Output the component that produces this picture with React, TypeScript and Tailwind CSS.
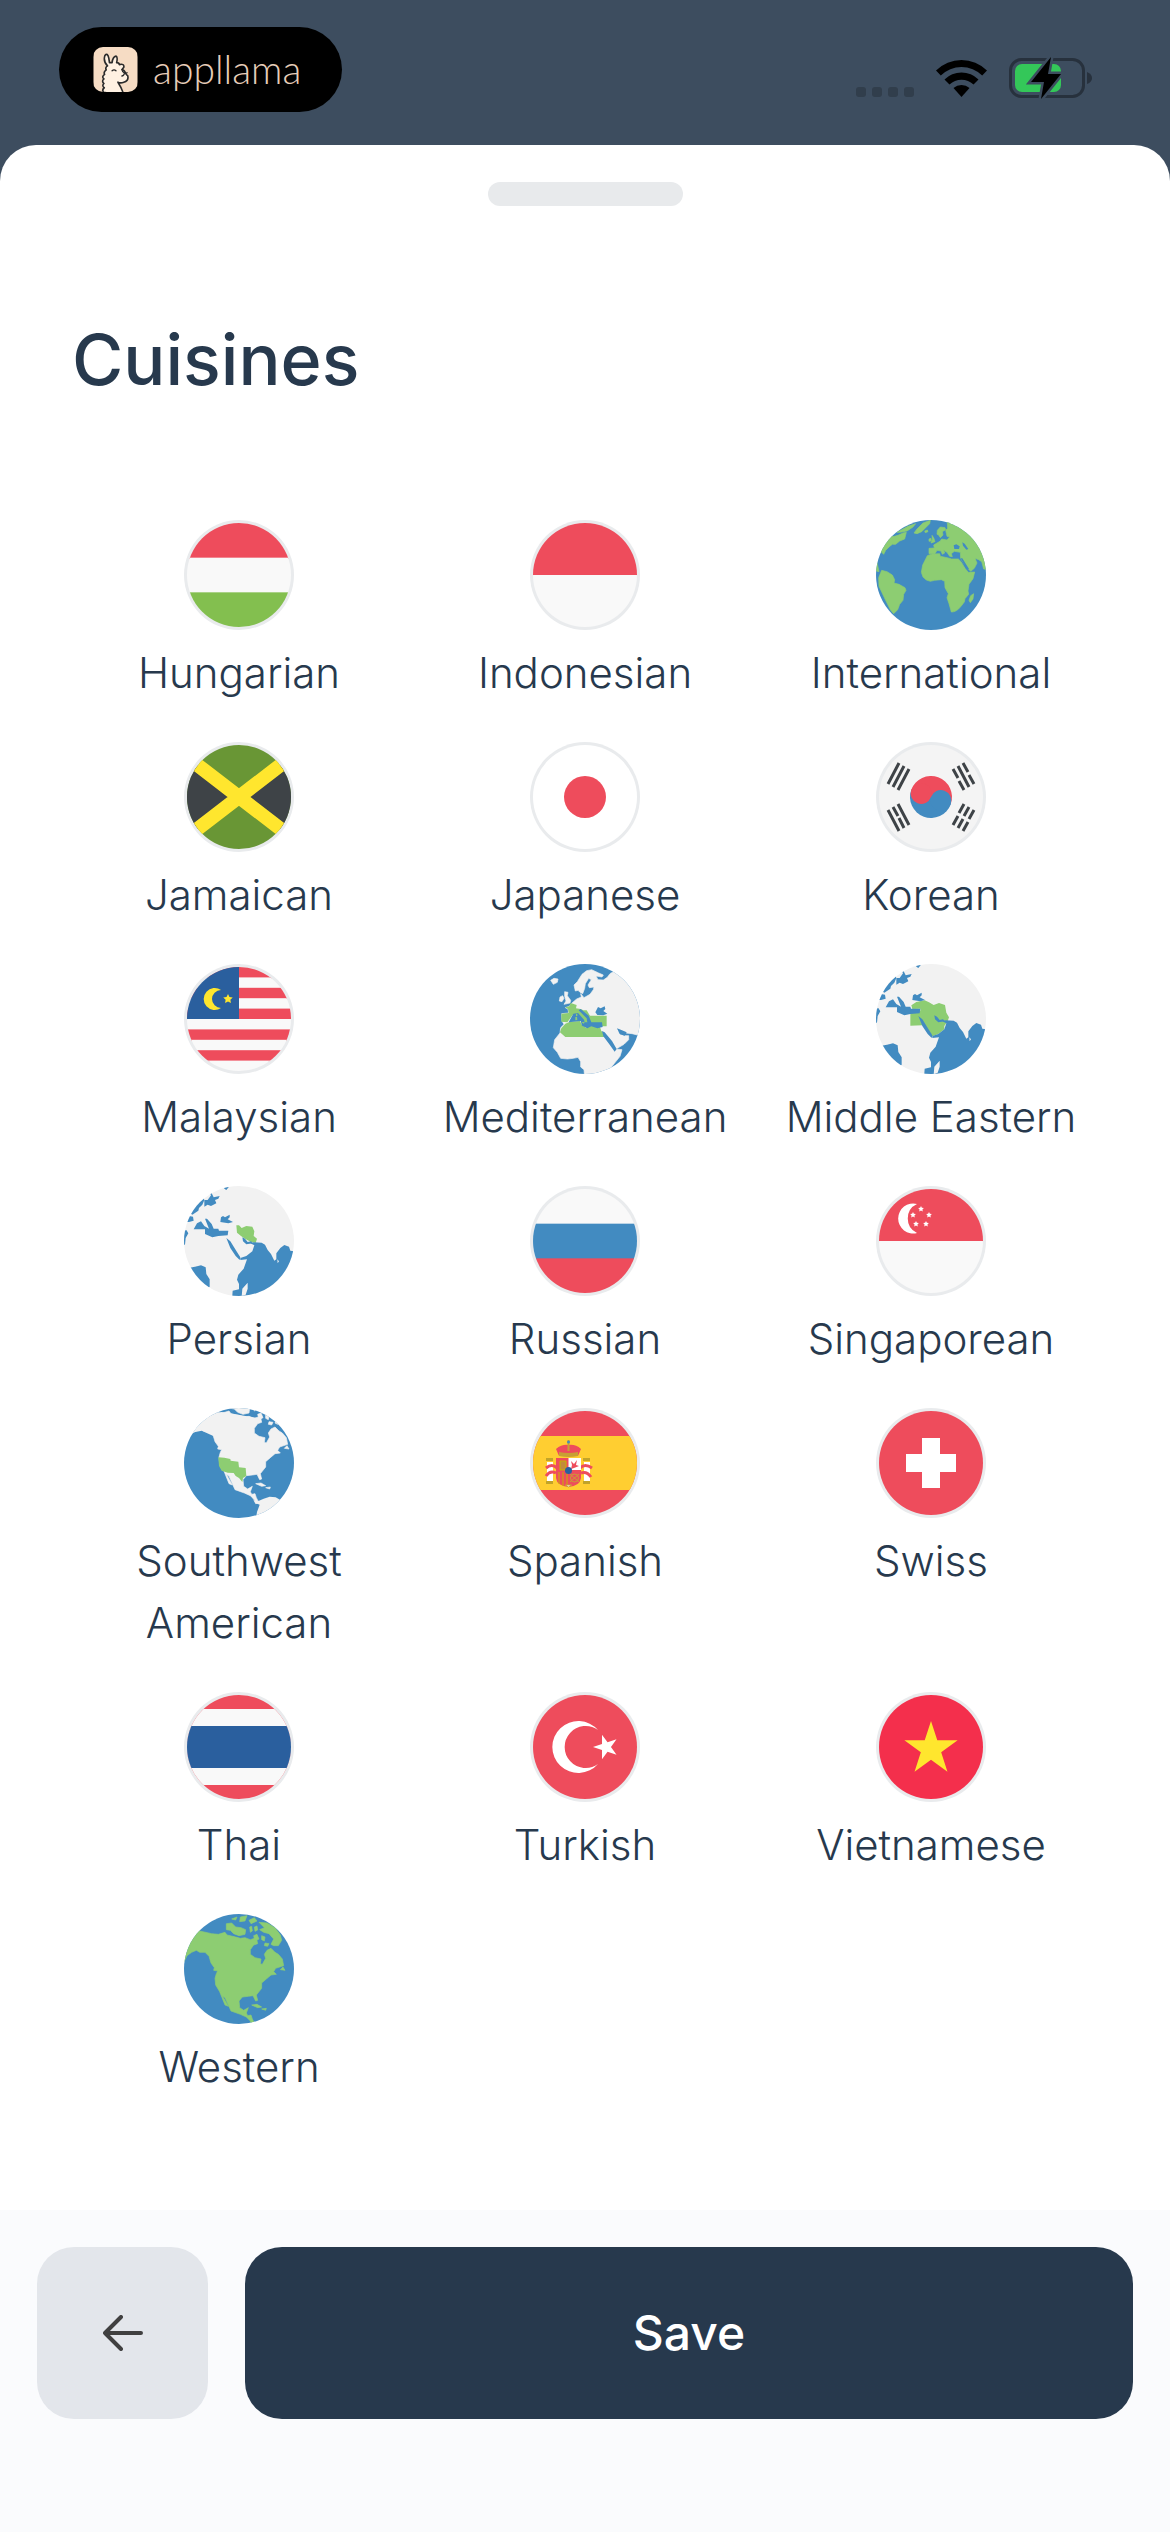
import React, { useState } from 'react';

interface Cuisine {
  name: string;
  icon: React.ReactNode;
}

const BLUE = '#428bc1';
const GREEN = '#8dcd72';
const LAND = '#f2f2f2';
const RED = '#ee4c5c';
const WHITE = '#f9f9f9';

const Flag = ({ children }: { children: React.ReactNode }) => (
  <span className="block size-[110px] rounded-full bg-[#e9ebed] p-[3px]">
    <svg viewBox="0 0 104 104" className="size-full rounded-full" aria-hidden="true">
      {children}
    </svg>
  </span>
);

const Globe = ({ viewBox, children }: { viewBox: string; children: React.ReactNode }) => (
  <svg viewBox={viewBox} className="size-[110px] rounded-full" aria-hidden="true">
    {children}
  </svg>
);

const Stripes = ({ colors }: { colors: string[] }) => (
  <>
    {colors.map((color, i) => (
      <rect key={i} y={(104 / colors.length) * i} width="104" height={104 / colors.length + 1} fill={color} />
    ))}
  </>
);

const starPoints = (cx: number, cy: number, r: number, ratio = 0.382, turn = -90) =>
  Array.from({ length: 10 }, (_, i) => {
    const radius = i % 2 ? r * ratio : r;
    const a = ((turn + i * 36) * Math.PI) / 180;
    return `${cx + radius * Math.cos(a)},${cy + radius * Math.sin(a)}`;
  }).join(' ');

const InternationalGlobe = () => (
  <Globe viewBox="49 59 330 330">
    <rect x="40" y="50" width="350" height="350" fill={BLUE} />
    <g fill={GREEN} stroke={GREEN} strokeWidth="2" strokeLinejoin="round">
      <path d="M203 166L216 161L240 160L242 168L262 172L276 176L296 176L304 184L316 204L326 216L345 215L340 235L328 252L325 272L327 282L316 295L314 305L304 318Q290 336 275 335L268 310L262 292L266 280L256 262L255 243L245 238L225 240L212 243L200 239L190 230L185 216L189 194Z" />
      <path d="M262 50L400 60L400 210L372 206L366 184L357 178L346 174L352 188L344 204L333 213L326 206L312 188L303 174L302 156L284 153L275 160L278 169L270 168L262 156L252 150L255 158L248 162L244 152L232 150L226 160L208 160L208 144L224 143L222 134L232 128L242 122L246 116L262 119L270 110L262 108L258 90L264 84Z" />
      <path d="M233 90L242 80L256 82L258 88L248 94L250 104L242 112L237 104L232 102Z" />
      <path d="M217 105L222 112L226 124L214 128L218 118ZM208 116l6-2l1 8l-7 1ZM195 92l8-3l2 5l-8 3Z" />
      <path d="M163 98L172 86L190 68L212 60L210 70L198 82L186 94L172 100Z" />
      <path d="M60 150L85 110L104 108L115 105L130 98L140 96L135 116L120 122L108 132L98 132L88 140L78 150L72 162ZM112 96L145 78L168 70L160 80L142 92L122 96Z" />
      <path d="M66 210L82 214L98 224L105 238L103 248L118 252L136 262L139 270L132 282L130 300L120 312L114 328L102 340L92 328L76 296L58 258L57 232Z" />
      <path d="M50 178L55 200L58 214L50 212ZM342 280L340 296L332 307L328 300L333 286Z" />
    </g>
    <path fill={BLUE} d="M282 135L290 132L300 138L298 146L284 146ZM308 126L315 130L326 146L320 148L310 136ZM303 174L308 174L328 206L322 208Z" />
  </Globe>
);

const MediterraneanGlobe = () => (
  <Globe viewBox="60 57 330 330">
    <rect x="50" y="50" width="350" height="350" fill={BLUE} />
    <g fill={LAND} stroke={LAND} strokeWidth="2" strokeLinejoin="round">
      <path d="M192 120L202 110L216 88L230 77L245 74L266 84L280 90L276 96L258 93L264 104L280 105L292 97L300 86L310 80L400 60L400 270L382 270L366 266L348 264L340 258L334 262L322 251L328 266L344 272L356 272L356 284L342 298L318 312L336 314L330 334L306 364L290 400L224 400L222 374L212 366L212 350L204 337L190 340L172 342L152 340L142 322L130 308L134 284L150 264L152 248L162 238L156 228L155 206L176 204L174 192L166 188L178 184L186 174L200 162L214 156L212 146L222 158L240 148L250 134L252 126L238 128L234 120L244 104L236 100L226 116L224 130L218 146L210 142L204 136L196 138Z" />
      <path d="M122 106L132 100L144 102L142 112L130 118ZM164 140L174 142L172 152L182 166L180 174L162 178L168 168L164 154ZM150 156l8-4l4 8l-6 10l-8-2Z" />
    </g>
    <path fill={GREEN} d="M150 262L154 250L166 236L180 230L210 228L216 240L228 248L244 242L270 246L274 258L286 268L286 276L166 276ZM154 206L176 204L174 192L166 187L178 184L182 174L200 180L198 190L212 192L220 196L230 196L240 212L290 212L290 244L256 244L232 240L200 214L188 210L172 232L154 230Z" />
    <g fill={BLUE}>
      <path d="M176 232L190 206L204 204L222 224L224 232L232 232L230 220L206 196L212 192L236 212L244 232L276 232L278 246L262 250L244 244L232 250L216 242L212 228Z" />
      <path d="M256 202L264 186L272 190L284 184L286 192L280 198L292 206L280 211L262 210ZM276 258L284 262L306 288L320 312L314 320L298 298L280 274ZM321 250L336 256L350 262L344 272L330 268Z" />
    </g>
    <path fill={GREEN} d="M196 216l5-1l1 10l-6 1ZM198 206l4 0l0 7l-4 0ZM214 232l10-2l-2 6Z" />
  </Globe>
);

// Africa and Asia seen from the Indian Ocean, `region` is painted under the inner seas
const AsiaGlobe = ({ region }: { region: React.ReactNode }) => (
  <Globe viewBox="57 64 330 330">
    <rect x="50" y="50" width="350" height="350" fill={LAND} />
    {region}
    <g fill={BLUE}>
      <path d="M226 280L244 274L262 260L268 242L256 236L266 233L290 234L300 240L308 256L318 268L328 288L334 284L334 266L346 250L358 241L372 246L376 258L400 262L400 420L200 420L203 378L222 374L222 358L216 345L220 330L236 312L246 284L226 286Z" />
      <path d="M232 218L240 222L248 232L258 230L264 236L244 239L234 230Z" />
      <path d="M184 220L196 230L216 262L226 278L224 286L212 274L196 250Z" />
      <path d="M86 194L96 176L108 170L118 184L132 192L120 162L126 162L140 178L146 192L160 192L162 198L190 198L188 212L160 214L142 218L120 208L120 194Z" />
      <path d="M166 172L168 158L174 154L180 158L194 150L194 158L188 164L204 172L190 176Z" />
      <path d="M118 106L128 106L138 92L134 84L140 86L146 98L164 94L160 102L150 106L154 116L138 124L128 120L118 126Z" />
      <path d="M76 146L96 118L116 100L118 106L112 120L102 130L100 138L82 150ZM60 172L72 154L84 156L86 168L72 172Z" />
      <path d="M50 202L64 196L70 206L62 220L60 240L50 240ZM70 310L90 306L108 302L122 308L124 328L134 344L134 366L110 390L70 340ZM176 60L192 66L184 76L178 72Z" />
    </g>
    <path fill={LAND} d="M248 354L248 372L242 390L230 396L232 372ZM337 284l5 6l-4 6Z" />
  </Globe>
);

const NorthAmerica = ({ color }: { color: string }) => (
  <g fill={color} stroke={color} strokeWidth="2" strokeLinejoin="round">
    <path d="M57 200L66 182L80 172L94 166L104 172L120 172L132 184L138 204L148 218L146 226L158 228L154 236L150 250L152 270L164 290L180 330L190 334L172 302L180 308L198 348L226 358L244 366L256 378L260 390L270 388L262 372L258 360L248 362L244 354L250 338L236 346L224 338L222 318L232 306L250 304L264 302L272 318L278 316L274 300L290 280L290 264L304 252L318 240L334 238L326 230L332 220L356 212L352 192L340 178L330 172L318 160L306 166L298 178L302 190L292 208L286 206L288 192L270 188L256 178L256 164L266 150L278 146L274 128L256 134L240 128L226 130L212 126L186 120L180 112L160 118L140 116L104 108L75 110L30 160Z" />
    <path d="M184 86L200 84L212 96L228 98L242 104L240 118L222 122L206 116L196 106L184 104ZM200 72l16-6l-4 9ZM226 66l20-4l-6 16l-16 2ZM252 76l16-8l8 10l-18 8Z" />
    <path d="M282 82L306 84L330 98L346 120L350 136L340 152L326 152L318 148L326 132L312 116L296 112L284 104L298 98ZM254 96l6-2l2 14l-6 4ZM268 96l8-3l2 12l-8 4ZM266 122l10-4l6 14l-12 6ZM290 122l10 4l-2 12l-8-4ZM300 144l12 2l-4 8l-10-2Z" />
    <path d="M346 224L354 216L360 226ZM260 330L276 328L290 336L278 338ZM290 342L304 340L302 346Z" />
  </g>
);

const SouthwestGlobe = () => (
  <Globe viewBox="57 54 330 330">
    <rect x="50" y="40" width="350" height="350" fill={BLUE} />
    <g transform="translate(12 -49)">
      <NorthAmerica color={LAND} />
    </g>
    <path fill={LAND} d="M80 128L130 80L170 66L220 74L262 82L290 86L270 104L200 110L150 140L110 122Z" />
    <path fill={LAND} d="M262 324L270 334L282 332L296 326L314 320L332 322L350 332L330 370L272 390L276 366L284 344L270 338Z" />
    <path fill={GREEN} d="M160 202L178 203L196 207L197 212L220 215L222 232L242 234L244 258L234 264L232 276L222 264L212 258L206 249L188 248L170 242L162 228Z" />
  </Globe>
);

const WesternGlobe = () => (
  <Globe viewBox="57 57 330 330">
    <rect x="50" y="50" width="350" height="350" fill={BLUE} />
    <NorthAmerica color={GREEN} />
  </Globe>
);

const KoreanFlag = () => (
  <Flag>
    <rect width="104" height="104" fill="#f4f4f4" />
    <g transform="rotate(20 52 52)">
      <path d="M31 52a21 21 0 0 1 42 0z" fill={RED} />
      <path d="M31 52a21 21 0 0 0 42 0z" fill={BLUE} />
      <circle cx="41.5" cy="52" r="10.5" fill={RED} />
      <circle cx="62.5" cy="52" r="10.5" fill={BLUE} />
    </g>
    <g stroke="#3e4347" strokeWidth="3">
      <path d="M9 39L20 18M14 42L25 21M19 45L30 24" />
      <path d="M9 65L20 86M14 62L19 71M20 73L25 83M19 59L30 80" />
      <path d="M74 24L79 33M80 36L85 45M79 21L90 42M84 18L89 27M90 30L95 39" />
      <path d="M74 80L79 71M80 68L85 59M79 83L84 74M85 71L90 62M84 86L89 77M90 74L95 65" />
    </g>
  </Flag>
);

const MalaysianFlag = () => (
  <Flag>
    <Stripes colors={[RED, WHITE, RED, WHITE, RED, WHITE, RED, WHITE, RED, WHITE]} />
    <rect width="52" height="52" fill="#2a5f9e" />
    <path d="M34 23a11 11 0 1 0 0 18a9 9 0 1 1 0-18z" fill="#ffe62e" />
    <polygon points={starPoints(41, 32, 5, 0.5)} fill="#ffe62e" />
  </Flag>
);

const SpanishFlag = () => (
  <Flag>
    <rect width="104" height="104" fill={RED} />
    <rect y="25" width="104" height="54" fill="#ffce31" />
    <path d="M14 51h6v19h-6zM51 51h6v19h-6z" fill="#fff" />
    <path d="M13 47h7v3h-7zM13 70h7v3h-7zM50 47h7v3h-7zM50 70h7v3h-7z" fill="#c2a429" />
    <path d="M13 57q6-5 11 0M13 65q4-6 10-3M59 57q-7-5-12 0M58 66q-4-6-10-4" fill="none" stroke={RED} strokeWidth="3" />
    <path d="M23 47h25v20q-1 8-12.500 9q-11.500-1-12.500-9z" fill={RED} />
    <path d="M35.500 47h12.500v12h-12.500z" fill="#fff" />
    <path d="M27 50h6v9h-6zM26 61v12M30 61v14M34 61v14" fill="#c28b3b" stroke="#c8b100" strokeWidth="1" />
    <path d="M38 50l3 3l3-4l-1 5l3 1l-5 2l-3 1l1-4z" fill={RED} />
    <circle cx="41.500" cy="67" r="4" fill="none" stroke="#c8a034" />
    <path d="M37 63l9 8M46 63l-9 8M35.500 76l3-2h-6z" stroke="#c8a034" fill="#fff" />
    <circle cx="35.500" cy="59.500" r="3.500" fill="#2a5f9e" />
    <path d="M26 45l-3-7q6-5 12.500-4q7-1 12.500 4l-3 7z" fill={RED} />
    <path d="M26 41q9.500 2 19 0v4q-9.500 2-19 0zM34.500 29h2v11h-2z" fill="#c8a034" />
    <circle cx="35.500" cy="31" r="1.500" fill="#428bc1" />
  </Flag>
);

const cuisines: Cuisine[] = [
  { name: 'Hungarian', icon: <Flag><Stripes colors={[RED, WHITE, '#83bf4f']} /></Flag> },
  { name: 'Indonesian', icon: <Flag><Stripes colors={[RED, WHITE]} /></Flag> },
  { name: 'International', icon: <InternationalGlobe /> },
  {
    name: 'Jamaican',
    icon: (
      <Flag>
        <rect width="104" height="104" fill="#699635" />
        <path d="M0 12L52 52L0 92zM104 12L52 52L104 92z" fill="#3e4347" />
        <path d="M0 12L104 92M104 12L0 92" stroke="#ffe62e" strokeWidth="14" />
      </Flag>
    ),
  },
  {
    name: 'Japanese',
    icon: (
      <Flag>
        <rect width="104" height="104" fill="#fff" />
        <circle cx="52" cy="52" r="21" fill={RED} />
      </Flag>
    ),
  },
  { name: 'Korean', icon: <KoreanFlag /> },
  { name: 'Malaysian', icon: <MalaysianFlag /> },
  { name: 'Mediterranean', icon: <MediterraneanGlobe /> },
  {
    name: 'Middle Eastern',
    icon: (
      <AsiaGlobe
        region={
          <path
            fill={GREEN}
            d="M163 188L178 178L203 173L216 179L230 187L246 181L264 187L268 210L276 224L272 236L262 250L262 260L244 274L226 281L196 234L196 248L160 249L160 210L190 204L190 198L166 199Z"
          />
        }
      />
    ),
  },
  {
    name: 'Persian',
    icon: (
      <AsiaGlobe
        region={
          <path
            fill={GREEN}
            d="M214 182L222 182L230 190L244 184L262 186L268 200L266 214L276 222L272 235L258 232L240 222L228 214L216 204Z"
          />
        }
      />
    ),
  },
  { name: 'Russian', icon: <Flag><Stripes colors={[WHITE, BLUE, RED]} /></Flag> },
  {
    name: 'Singaporean',
    icon: (
      <Flag>
        <Stripes colors={[RED, WHITE]} />
        <path d="M38 15a15 15 0 1 0 0 29a16 16 0 0 1 0-29z" fill="#fff" />
        {[[42, 20], [50, 26], [34, 26], [37, 35], [47, 35]].map(([x, y]) => (
          <polygon key={`${x}-${y}`} points={starPoints(x, y, 3, 0.5)} fill="#fff" />
        ))}
      </Flag>
    ),
  },
  { name: 'Southwest American', icon: <SouthwestGlobe /> },
  { name: 'Spanish', icon: <SpanishFlag /> },
  {
    name: 'Swiss',
    icon: (
      <Flag>
        <rect width="104" height="104" fill={RED} />
        <path d="M43 27h18v16h16v18h-16v16h-18v-16h-16v-18h16z" fill="#fff" />
      </Flag>
    ),
  },
  {
    name: 'Thai',
    icon: (
      <Flag>
        <rect width="104" height="104" fill={RED} />
        <rect y="14" width="104" height="76" fill={WHITE} />
        <rect y="31" width="104" height="42" fill="#2a5f9e" />
      </Flag>
    ),
  },
  {
    name: 'Turkish',
    icon: (
      <Flag>
        <rect width="104" height="104" fill={RED} />
        <path d="M65 35a26 26 0 1 0 0 34a21 21 0 1 1 0-34z" fill="#fff" />
        <polygon points={starPoints(73, 52, 13, 0.382, 180)} fill="#fff" />
      </Flag>
    ),
  },
  {
    name: 'Vietnamese',
    icon: (
      <Flag>
        <rect width="104" height="104" fill="#f42f4c" />
        <polygon points={starPoints(52, 54, 28)} fill="#ffe62e" />
      </Flag>
    ),
  },
  { name: 'Western', icon: <WesternGlobe /> },
];

const LlamaLogo = () => (
  <svg viewBox="39 77 135 138" className="size-[45px] rounded-[10px]" aria-hidden="true">
    <rect x="39" y="77" width="135" height="138" fill="#f6dcc4" />
    <path
      d="M70 216q-6-8 2-14q-8-6-1-13q-8-7 0-14q-8-7 2-14q-4-8 5-14q-4-7 4-12q-14-14-8-32q8-10 12 8l2 14q4 0 8 0q2-18 12-20q6 2 2 20q8 0 8 6q16-4 14 8l-6 8q8 0 12 12q2 4 6 6q4 16-12 20q-10 4-18 0q14 22 18 41z"
      fill="#fff1e2"
      stroke="#2b2b2b"
      strokeWidth="5"
      strokeLinejoin="round"
    />
    <path d="M96 150q6-6 12 0M128 152q6 8 14 4M134 158q-2 8-8 8" fill="none" stroke="#2b2b2b" strokeWidth="4" strokeLinecap="round" />
  </svg>
);

const StatusIcons = () => (
  <div className="flex items-end gap-[22px]">
    <div className="mb-0.5 flex gap-[6px]">
      {[0, 1, 2, 3].map(i => (
        <span key={i} className="size-[10px] rounded-[3px] bg-[#313e4c]" />
      ))}
    </div>
    <svg viewBox="0 0 51 38" className="mb-0.5 h-[38px] w-[51px]" aria-hidden="true">
      <path d="M0 11.500a36 36 0 0 1 51 0l-4.800 5a29.500 29.500 0 0 0-41.400 0z" />
      <path d="M8.500 20.500a24 24 0 0 1 34 0l-5 5a17.500 17.500 0 0 0-24 0z" />
      <path d="M25.500 38l-8-9a12 12 0 0 1 16 0z" />
    </svg>
    <svg viewBox="0 0 83 42" className="h-[42px] w-[83px]" aria-hidden="true">
      <rect x="1.500" y="2.500" width="73" height="37" rx="11" fill="none" stroke="#27313d" strokeWidth="3" />
      <path d="M78 15q5 2 5 6t-5 6z" fill="#27313d" />
      <rect x="6" y="7" width="46" height="28" rx="7" fill="#34c759" />
      <path d="M42 0L22 25h13l-3 17L52 17H39z" stroke="#3d4d5f" strokeWidth="5" />
      <path d="M42 0L22 25h13l-3 17L52 17H39z" />
    </svg>
  </div>
);

const App: React.FC = () => {
  const [selected, setSelected] = useState<string[]>([]);

  const toggle = (name: string) => {
    setSelected(prev => (prev.includes(name) ? prev.filter(n => n !== name) : [...prev, name]));
  };

  return (
    <div className="flex min-h-screen flex-col bg-[#3d4d5f] font-['Inter','Liberation_Sans',sans-serif] text-[#27394d]">
      <header className="flex h-[145px] items-start justify-between pr-[78px] pl-[59px]">
        <div className="mt-[27px] flex h-[85px] w-[283px] items-center gap-[15px] rounded-full bg-black pl-[34px]">
          <LlamaLogo />
          <span className="font-['Lato','Liberation_Sans',sans-serif] text-[39px] leading-[45px] font-light text-[#e6cdb9]">appllama</span>
        </div>
        <div className="mt-[57px]">
          <StatusIcons />
        </div>
      </header>

      <main className="flex flex-1 flex-col rounded-t-[36px] bg-white pt-[37px]">
        <div className="h-6 w-[195px] self-center rounded-full bg-[#e8eaec]" />
        <h1 className="mt-[109px] px-[72px] text-[70px] leading-[90px] font-medium">Cuisines</h1>

        <div className="mt-[115px] grid grid-cols-3 gap-y-[38px] px-[66px]">
          {cuisines.map(cuisine => (
            <button
              key={cuisine.name}
              type="button"
              aria-pressed={selected.includes(cuisine.name)}
              onClick={() => toggle(cuisine.name)}
              className="flex flex-col items-center gap-3"
            >
              {cuisine.icon}
              <span className="text-[42px] leading-[62px] font-light">{cuisine.name}</span>
            </button>
          ))}
        </div>
      </main>

      <footer className="flex gap-[37px] bg-[#fafbfd] px-[37px] pt-[37px] pb-[113px]">
        <button type="button" aria-label="Back" className="flex h-[172px] w-[171px] items-center justify-center rounded-[37px] bg-[#e3e6eb]">
          <svg viewBox="0 0 40 36" className="h-[36px] w-[40px]" fill="none" stroke="#404040" strokeWidth="4" strokeLinecap="round" strokeLinejoin="round" aria-hidden="true">
            <path d="M38 18H2M18 2L2 18L18 34" />
          </svg>
        </button>
        <button type="button" className="h-[172px] flex-1 rounded-[37px] bg-[#27394d] text-[48px] font-medium text-white">
          Save
        </button>
      </footer>
    </div>
  );
};

export default App;
